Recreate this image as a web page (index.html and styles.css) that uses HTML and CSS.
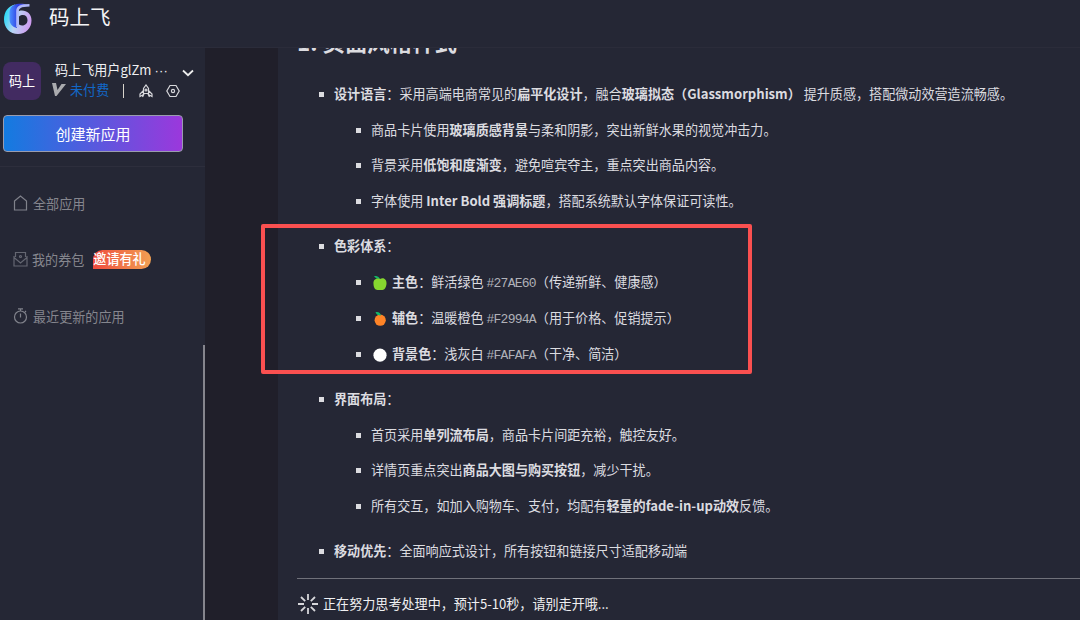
FILE: index.html
```html
<!DOCTYPE html>
<html lang="zh-CN">
<head>
  <meta charset="UTF-8">
  <meta name="viewport" content="width=device-width, initial-scale=1.0">
  <title>码上飞</title>
  <link rel="stylesheet" href="styles.css">
</head>
<body>
  <header class="header">
    <svg class="logo" viewBox="0 0 30 32">
      <defs>
        <linearGradient id="ring" x1="0" y1="0.3" x2="1" y2="0.6">
          <stop offset="0" stop-color="#20d8f8"/>
          <stop offset="0.45" stop-color="#b8d4f4"/>
          <stop offset="1" stop-color="#d09af0"/>
        </linearGradient>
        <linearGradient id="stem" x1="0" y1="0" x2="1" y2="0">
          <stop offset="0" stop-color="#4a90ff"/>
          <stop offset="0.5" stop-color="#3038e0"/>
          <stop offset="1" stop-color="#8898f4"/>
        </linearGradient>
      </defs>
      <path d="M12 2.500C5 4 1 10 1 17.500 1 26 7 32 15 32s13.500-6 13.500-13.500C28.500 12 24 8.500 19 8.500c-2 0-4 .5-5 1.500z" fill="url(#ring)"/>
      <path d="M14 2C9 3 6.500 6 6.500 11v6c0 5 3 8 7.500 9V9c0-4 3-5.500 11-6-3-1-7-1.500-11-1z" fill="url(#stem)"/>
      <path d="M14.500 25V9c0-4 3-5.500 12-5.800" fill="none" stroke="#b0b8f8" stroke-width="2.600"/>
      <path d="M16 14.500c4-3 8.500-1 8.500 3.500s-4.500 7-8.500 4.500z" fill="#252735"/>
    </svg>
    <span class="brand">码上飞</span>
  </header>

  <div class="layout">
    <aside class="sidebar">
      <div class="account">
        <div class="user">
          <div class="avatar">码上</div>
          <div class="user-info">
            <div class="user-name">
              <span class="name">码上飞用户glZm <span class="dots">···</span></span>
              <svg class="chevron" viewBox="0 0 12 8"><path d="M1 1.500l5 4.700 5-4.700"/></svg>
            </div>
            <div class="user-plan">
              <svg class="vip" viewBox="0 0 14 13"><path d="M0 0h4l1.500 7L9.500 1H14L4.500 13H3z"/></svg>
              <span class="plan">未付费</span>
              <span class="divider"></span>
              <svg class="tool rocket" viewBox="0 0 14 14"><path d="M4.500 9.500V4.500L7 1l2.500 3.500v5zM4.500 6.500L1 10v2.500l3.500-2M9.500 6.500L13 10v2.500l-3.500-2M5 10l-1.500 3M9 10l1.500 3"/><circle cx="7" cy="6" r="1"/></svg>
              <svg class="tool" viewBox="0 0 14 14"><path d="M4 1.500h6L13.200 7 10 12.500H4L.8 7z"/><circle cx="7" cy="7" r="1.600"/></svg>
            </div>
          </div>
        </div>
        <button class="create-btn">创建新应用</button>
      </div>
      <nav class="menu">
        <a class="menu-item">
          <svg class="menu-icon" viewBox="0 0 15 16"><path d="M1.500 6l6-5 6 5v9h-12z"/></svg>
          <span>全部应用</span>
        </a>
        <a class="menu-item coupon">
          <svg class="menu-icon" viewBox="0 0 15 16"><path d="M2.500 6V1.500h10V6M1 5v10h13V5M1 6.500L7.500 12 14 6.500"/><circle cx="7.500" cy="5.500" r="1"/></svg>
          <span>我的券包</span>
          <span class="tag">邀请有礼</span>
        </a>
        <a class="menu-item">
          <svg class="menu-icon" viewBox="0 0 15 16"><circle cx="7.500" cy="9" r="6"/><path d="M5 .8h5M7.500 1v2M7.500 5.500v4M12 3l1 1"/></svg>
          <span>最近更新的应用</span>
        </a>
      </nav>
      <div class="scroll-thumb"></div>
    </aside>

    <main class="content">
      <h3 class="title">1. 页面风格样式</h3>
      <ul class="doc">
        <li><b>设计语言</b>：采用高端电商常见的<b>扁平化设计</b>，融合<b>玻璃拟态（Glassmorphism）</b> 提升质感，搭配微动效营造流畅感。
          <ul>
            <li>商品卡片使用<b>玻璃质感背景</b>与柔和阴影，突出新鲜水果的视觉冲击力。</li>
            <li>背景采用<b>低饱和度渐变</b>，避免喧宾夺主，重点突出商品内容。</li>
            <li>字体使用 <b>Inter Bold 强调标题</b>，搭配系统默认字体保证可读性。</li>
          </ul>
        </li>
        <li class="colors"><b>色彩体系</b>：
          <ul>
            <li><svg class="emoji" viewBox="0 0 14 14"><path d="M1 0c3-.5 5 1 6 3-3 0-5-1-6-3z" fill="#12b86a"/><path d="M7 3c4-2 7 1 6.500 5-.3 3-2 6-4 6H4.500C2 14 .5 11 .5 8 0 4 3 1.500 7 3z" fill="#86d72f"/></svg><b>主色</b>：鲜活绿色 <code>#27AE60</code>（传递新鲜、健康感）</li>
            <li><svg class="emoji" viewBox="0 0 14 14"><circle cx="7.200" cy="8.200" r="5.600" fill="#ff8427"/><path d="M2.500 0c3-.3 5 1 5.500 3.500C5 3.500 3 2.500 2.500 0z" fill="#12b86a"/></svg><b>辅色</b>：温暖橙色 <code>#F2994A</code>（用于价格、促销提示）</li>
            <li><svg class="emoji" viewBox="0 0 14 14"><circle cx="7" cy="7.200" r="6.600" fill="#fff"/></svg><b>背景色</b>：浅灰白 <code>#FAFAFA</code>（干净、简洁）</li>
          </ul>
        </li>
        <li><b>界面布局</b>：
          <ul>
            <li>首页采用<b>单列流布局</b>，商品卡片间距充裕，触控友好。</li>
            <li>详情页重点突出<b>商品大图与购买按钮</b>，减少干扰。</li>
            <li>所有交互，如加入购物车、支付，均配有<b>轻量的fade-in-up动效</b>反馈。</li>
          </ul>
        </li>
        <li><b>移动优先</b>：全面响应式设计，所有按钮和链接尺寸适配移动端</li>
      </ul>
      <div class="status">
        <svg class="spinner" viewBox="0 0 20 20"><path d="M10 0v6M10 14v6M0 10h6M14 10h6M3 3l4.200 4.200M12.800 12.800L17 17M3 17l4.200-4.200M12.800 7.200L17 3"/></svg>
        <span>正在努力思考处理中，预计5-10秒，请别走开哦...</span>
      </div>
      <div class="highlight"></div>
    </main>
  </div>
</body>
</html>
```
FILE: styles.css
```css
* {
  box-sizing: border-box;
}
body {
  margin: 0;
  height: 620px;
  overflow: hidden;
  background: #252735;
  color: #dcdce0;
  font-family: "Noto Sans CJK SC", sans-serif;
  font-size: 13.08px;
}
svg {
  flex-shrink: 0;
}
.header {
  display: flex;
  height: 48px;
  padding: 2px 0 0 3px;
  border-bottom: 1px solid #2b2c3a;
}
.logo {
  width: 30px;
  height: 32px;
}
.brand {
  margin-left: 16px;
  font-size: 20.5px;
  line-height: 28px;
  color: #f4f4f6;
}
.layout {
  display: flex;
  height: 572px;
  background: #201f2a;
}
.sidebar {
  position: relative;
  width: 205px;
  background: #252735;
}
.account {
  height: 119px;
  padding: 12px 0 0 3px;
  border-bottom: 1px solid #2d2e3c;
}
.user {
  display: flex;
  height: 55px;
}
.avatar {
  width: 38px;
  height: 38px;
  margin-top: 2px;
  border-radius: 8px;
  background: #422b61;
  color: #fff;
  line-height: 37px;
  text-align: center;
}
.user-info {
  margin-left: 11px;
}
.user-name {
  display: flex;
  align-items: center;
  height: 20px;
  padding-left: 3px;
  color: #f0f0f2;
}
.name {
  width: 127px;
  line-height: 18px;
  white-space: nowrap;
}
.dots {
  font-family: "Liberation Sans", sans-serif;
  letter-spacing: 0.2px;
}
.chevron {
  width: 12px;
  height: 8px;
  margin-top: 5px;
  fill: none;
  stroke: #eee;
  stroke-width: 1.8;
}
.user-plan {
  display: flex;
  align-items: center;
  height: 22px;
}
.vip {
  width: 14px;
  height: 13px;
  margin-top: -3px;
  fill: #aaabae;
}
.plan {
  margin: -3px 0 0 4px;
  color: #1268c8;
}
.divider {
  width: 1px;
  height: 14px;
  margin: 0 15px 0 14px;
  background: #d8d4cc;
}
.tool {
  width: 14px;
  height: 14px;
  fill: none;
  stroke: #d8d8dc;
  stroke-width: 1.2;
}
.rocket {
  margin-right: 13px;
}
.create-btn {
  display: block;
  width: 180px;
  height: 37px;
  padding: 0;
  border: 1px solid #9a9cae;
  border-radius: 4px;
  background: linear-gradient(90deg, #137be0, #9b38dc);
  color: #fff;
  font-family: inherit;
  font-size: 15px;
}
.menu {
  padding: 20px 0 0 13px;
}
.menu-item {
  display: flex;
  align-items: center;
  height: 32px;
  margin-bottom: 24.3px;
  color: #85868e;
}
.menu-item span {
  margin-top: 1px;
}
.menu-icon {
  width: 15px;
  height: 16px;
  margin-right: 5px;
  fill: none;
  stroke: #80828b;
  stroke-width: 1.2;
}
.coupon .menu-icon {
  margin-right: 4px;
  stroke: #656772;
}
.menu-item .tag {
  height: 19px;
  width: 58px;
  margin: 1px 0 0 9px;
  border-radius: 10px 10px 10px 0;
  background: linear-gradient(90deg, #ee4b3e, #f2a052);
  color: #fff;
  font-weight: 500;
  line-height: 18px;
}
.scroll-thumb {
  position: absolute;
  top: 297px;
  right: 0;
  bottom: 0;
  width: 2px;
  background: #85858d;
}
.content {
  flex: 1;
  height: 572px;
  margin-left: 73px;
  padding-left: 19px;
  overflow: hidden;
  background: #252735;
}
.title {
  height: 24px;
  margin: -21px 0 18px;
  font-size: 22.4px;
  line-height: 28px;
}
.doc,
.doc ul {
  margin: 0;
  padding: 0 0 0 37px;
  list-style: none;
}
.doc {
  height: 510px;
  border-bottom: 1px solid #70717a;
}
.doc li {
  line-height: 23px;
  padding-top: 12.8px;
  white-space: nowrap;
}
.doc > li {
  margin-bottom: 8.7px;
}
/* square bullets */
.doc li::before {
  content: "";
  float: left;
  width: 5px;
  height: 5px;
  margin: 10px 0 0 -15px;
  background: #dcdce0;
}
.doc .colors li {
  padding-top: 13.2px;
}
.doc b {
  font-weight: 700;
}
code {
  font-family: "Liberation Mono", monospace;
  font-size: 13px;
  letter-spacing: -0.75px;
  line-height: 1;
  color: #b0b1b8;
}
.emoji {
  width: 14px;
  height: 14px;
  margin: -2px 5px -2px 2px;
  vertical-align: -1px;
}
.status {
  display: flex;
  align-items: center;
  height: 50px;
  color: #f0f0f2;
}
.status span {
  margin-top: -2px;
}
.spinner {
  width: 20px;
  height: 20px;
  margin: 0 5px 0 1px;
  fill: none;
  stroke: #d6d6da;
  stroke-width: 1.8;
}
/* marker drawn over the colour section */
.highlight {
  position: absolute;
  left: 261px;
  top: 224px;
  width: 491px;
  height: 150px;
  border: 4px solid #fa5050;
  border-radius: 2px;
}
```
